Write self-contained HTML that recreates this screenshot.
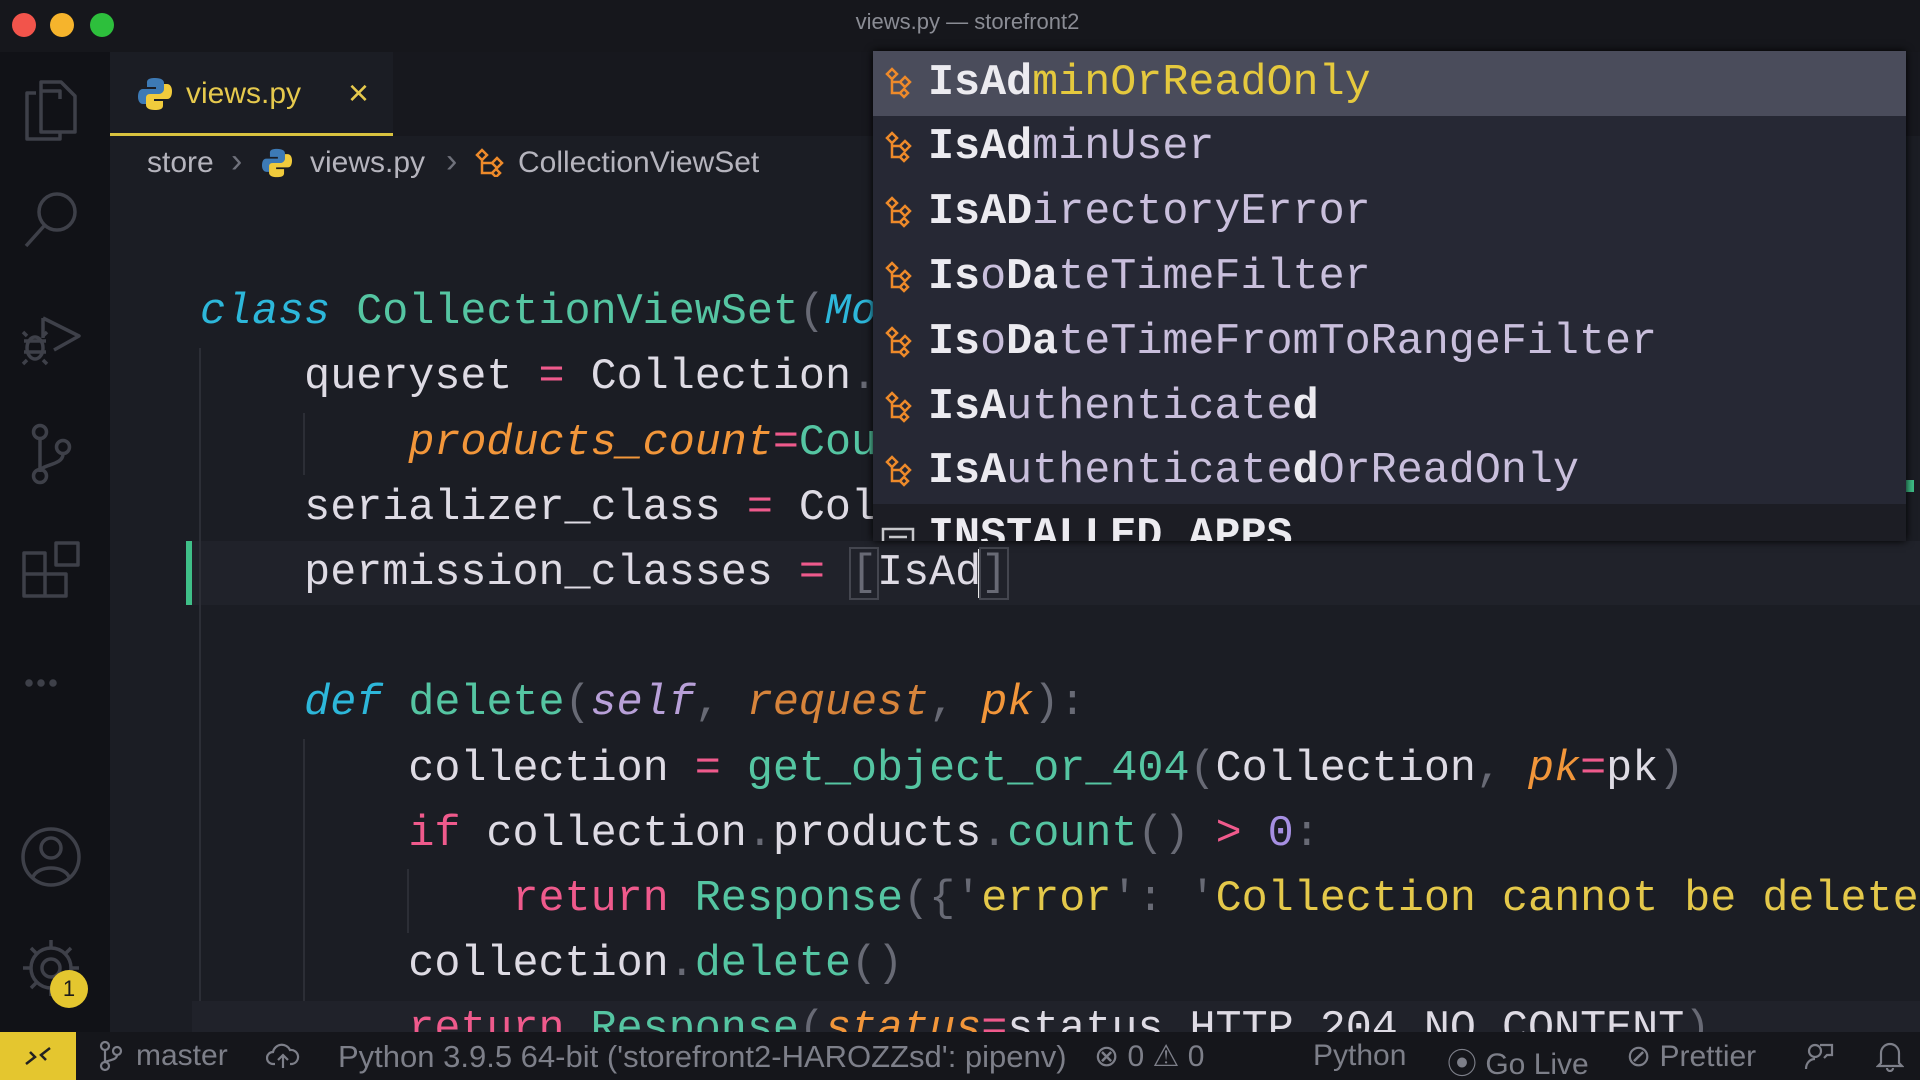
<!DOCTYPE html>
<html><head><meta charset="utf-8"><style>
*{margin:0;padding:0;box-sizing:border-box}
body{width:1920px;height:1080px;overflow:hidden;background:#1b1d24;position:relative;font-family:"Liberation Sans",sans-serif}
.abs{position:absolute}
#wrap{position:absolute;left:0;top:0;width:1920px;height:1080px;overflow:hidden}
#title{left:0;top:0;width:1920px;height:52px;background:#16171c}
#act{left:0;top:52px;width:110px;height:980px;background:#111217}
#tabs{left:110px;top:52px;width:1810px;height:84px;background:#17181e}
#tab{left:110px;top:52px;width:283px;height:84px;background:#1b1d24;border-bottom:3px solid #d9c23f}
#status{left:0;top:1032px;width:1920px;height:48px;background:#15161b;color:#7d7f89;font-size:30px}
.code{position:absolute;left:200px;font-family:"Liberation Mono",monospace;font-size:43.4px;line-height:65.2px;white-space:pre;color:#dedbe4;height:65.2px}
.k{color:#2db7da;font-style:italic}.c{color:#55c5a2}.p{color:#686a75}.o{color:#ef5a8c}
.or{color:#f2963a;font-style:italic}.s{color:#e4c84a}.n{color:#a68fe2}.sf{color:#b8a0d8;font-style:italic}.rq{color:#d7843b;font-style:italic}
.guide{position:absolute;width:2px;background:#2c2e36}
#sug{left:873px;top:51px;width:1033px;height:490px;background:#262834;overflow:hidden;box-shadow:0 0 8px #000;font-family:"Liberation Mono",monospace;font-size:43.4px}
.row{position:absolute;left:0;width:1033px;height:65px;line-height:65px;padding-left:55px;color:#c9bfdc;white-space:pre}
.row b{color:#ecebf0}
</style></head><body><div id="wrap">
<div id="title" class="abs">
 <div class="abs" style="left:12px;top:13px;width:24px;height:24px;border-radius:50%;background:#f2544b"></div>
 <div class="abs" style="left:50px;top:13px;width:24px;height:24px;border-radius:50%;background:#f6b42c"></div>
 <div class="abs" style="left:90px;top:13px;width:24px;height:24px;border-radius:50%;background:#2dbf3c"></div>
 <div class="abs" style="left:0;width:1935px;top:9px;text-align:center;color:#8a8c94;font-size:22px">views.py — storefront2</div>
</div>
<div id="act" class="abs">
<svg width="110" height="980" fill="none" stroke="#3e4049" stroke-width="3.5" stroke-linejoin="round">
 <g transform="translate(0,-52)">
 <path d="M42 91h18v8M36 93h-9v46h33v-6"/><path d="M41 82h20l14 14v36H41z"/>
 <circle cx="57" cy="212" r="18"/><path d="M44 226l-18 20"/>
 <path d="M43 318l36 18-25 14M43 318v20"/><ellipse cx="35" cy="348" rx="8" ry="11"/><path d="M24 341h22M24 352h22M27 336l-4-4M43 336l4-4M27 360l-4 4M43 360l4 4"/>
 <circle cx="40" cy="432" r="6.5"/><circle cx="40" cy="476" r="6.5"/><circle cx="63" cy="447" r="6.5"/><path d="M40 439v30M63 454c0 12-23 10-23 18"/>
 <path d="M24 553h21v21H24zM24 574h21v22H24zM45 574h21v22H45zM56 543h22v22H56z"/>
 <circle cx="29" cy="683" r="2" fill="#3e4049"/><circle cx="41" cy="683" r="2" fill="#3e4049"/><circle cx="53" cy="683" r="2" fill="#3e4049"/>
 <circle cx="51" cy="857" r="28"/><circle cx="51" cy="848" r="10"/><path d="M33 877c5-12 31-12 36 0"/>
 <circle cx="51" cy="968" r="9"/><path d="M51 940v8M51 988v8M23 968h8M71 968h8M31 948l6 6M65 982l6 6M71 948l-6 6M37 982l-6 6"/><circle cx="51" cy="968" r="20"/>
 </g></svg>
 <div class="abs" style="left:50px;top:918px;width:38px;height:38px;border-radius:50%;background:#e4c62f;color:#1b1b1b;font-size:22px;text-align:center;line-height:38px">1</div>
</div>
<div id="tabs" class="abs"></div>
<div id="tab" class="abs">
 <svg class="abs" style="left:28px;top:24px" width="34" height="36" viewBox="0 0 34 36"><path d="M17 2c-8 0-8 3-8 5v4h9v2H5c-4 0-5 4-5 8s2 7 5 7h3v-5c0-3 3-5 5-5h9c3 0 4-2 4-4V7c0-3-3-5-9-5z" fill="#3d7ab5"/><path d="M17 34c8 0 8-3 8-5v-4h-9v-2h13c4 0 5-4 5-8s-2-7-5-7h-3v5c0 3-3 5-5 5h-9c-3 0-4 2-4 4v7c0 3 3 5 9 5z" fill="#f1cb3c"/></svg>
 <div class="abs" style="left:76px;top:25px;color:#e6c94d;font-size:30px">views.py</div>
 <div class="abs" style="left:238px;top:20px;color:#e6c94d;font-size:36px">×</div>
</div>
<div class="abs" style="left:147px;top:146px;color:#b5b4bd;font-size:30px;white-space:nowrap">store</div>
<div class="abs" style="left:231px;top:142px;color:#6f717b;font-size:34px">›</div>
<svg class="abs" style="left:262px;top:147px" width="30" height="32" viewBox="0 0 34 36"><path d="M17 2c-8 0-8 3-8 5v4h9v2H5c-4 0-5 4-5 8s2 7 5 7h3v-5c0-3 3-5 5-5h9c3 0 4-2 4-4V7c0-3-3-5-9-5z" fill="#3d7ab5"/><path d="M17 34c8 0 8-3 8-5v-4h-9v-2h13c4 0 5-4 5-8s-2-7-5-7h-3v5c0 3-3 5-5 5h-9c-3 0-4 2-4 4v7c0 3 3 5 9 5z" fill="#f1cb3c"/></svg>
<div class="abs" style="left:310px;top:146px;color:#b5b4bd;font-size:30px">views.py</div>
<div class="abs" style="left:446px;top:142px;color:#6f717b;font-size:34px">›</div>
<svg class="abs" style="left:474px;top:147px" width="32" height="30" fill="none" stroke="#ee8a2a" stroke-width="2.5"><path d="M3 8l5-5 5 5-5 5zM18 16l5-5 5 5-5 5zM18 26l4-4 4 4-4 4zM8 13v13h10M8 16h10"/></svg>
<div class="abs" style="left:518px;top:146px;color:#b5b4bd;font-size:30px">CollectionViewSet</div>

<div class="abs" style="left:192px;top:541px;width:1728px;height:64px;background:#20222a"></div>
<div class="abs" style="left:186px;top:541px;width:6px;height:64px;background:#3fbf88"></div>
<div class="guide" style="left:199px;top:348px;height:684px"></div>
<div class="guide" style="left:303px;top:413px;height:62px"></div>
<div class="guide" style="left:303px;top:739px;height:293px"></div>
<div class="guide" style="left:407px;top:869px;height:64px"></div>
<div class="abs" style="left:192px;top:1001px;width:1728px;height:31px;background:#20222a"></div>

<div class="code" style="top:280px"><span class="k">class</span> <span class="c">CollectionViewSet</span><span class="p">(</span><span class="k">ModelViewSet</span><span class="p">):</span></div>
<div class="code" style="top:345px">    queryset <span class="o">=</span> Collection<span class="p">.</span>objects<span class="p">.</span><span class="c">annotate</span><span class="p">(</span></div>
<div class="code" style="top:411px">        <span class="or">products_count</span><span class="o">=</span><span class="c">Count</span><span class="p">(</span><span class="s">'products'</span><span class="p">))</span></div>
<div class="code" style="top:476px">    serializer_class <span class="o">=</span> CollectionSerializer</div>
<div class="code" style="top:541px">    permission_classes <span class="o">=</span> <span class="p" style="outline:2px solid #44464f">[</span>IsAd<span style="border-left:3px solid #e8e8e8;margin-left:-3px"></span><span class="p" style="outline:2px solid #44464f">]</span></div>
<div class="code" style="top:671px">    <span class="k">def</span> <span class="c">delete</span><span class="p">(</span><span class="sf">self</span><span class="p">,</span> <span class="rq">request</span><span class="p">,</span> <span class="or">pk</span><span class="p">):</span></div>
<div class="code" style="top:737px">        collection <span class="o">=</span> <span class="c">get_object_or_404</span><span class="p">(</span>Collection<span class="p">,</span> <span class="or">pk</span><span class="o">=</span>pk<span class="p">)</span></div>
<div class="code" style="top:802px">        <span class="o">if</span> collection<span class="p">.</span>products<span class="p">.</span><span class="c">count</span><span class="p">()</span> <span class="o">&gt;</span> <span class="n">0</span><span class="p">:</span></div>
<div class="code" style="top:867px">            <span class="o">return</span> <span class="c">Response</span><span class="p">({</span><span class="p">'</span><span class="s">error</span><span class="p">'</span><span class="p">:</span> <span class="p">'</span><span class="s">Collection cannot be deleted</span></div>
<div class="code" style="top:932px">        collection<span class="p">.</span><span class="c">delete</span><span class="p">()</span></div>
<div class="code" style="top:997px">        <span class="o">return</span> <span class="c">Response</span><span class="p">(</span><span class="or">status</span><span class="o">=</span>status<span class="p">.</span>HTTP_204_NO_CONTENT<span class="p">)</span></div>

<div class="abs" style="left:1906px;top:480px;width:8px;height:12px;background:#3fbf88"></div>

<div id="sug" class="abs">
 <div class="row" style="top:0;background:#4a4c5b;color:#e5c93e"><b>IsAd</b>minOrReadOnly</div>
 <div class="row" style="top:64px"><b>IsAd</b>minUser</div>
 <div class="row" style="top:129px"><b>IsAD</b>irectoryError</div>
 <div class="row" style="top:194px"><b>Is</b>o<b>Da</b>teTimeFilter</div>
 <div class="row" style="top:259px"><b>Is</b>o<b>Da</b>teTimeFromToRangeFilter</div>
 <div class="row" style="top:324px"><b>IsA</b>uthenticate<b>d</b></div>
 <div class="row" style="top:388px"><b>IsA</b>uthenticate<b>d</b>OrReadOnly</div>
 <div class="row" style="top:453px;background:#1c1d24"><b>INSTALLED_APPS</b></div>
 <svg class="abs" style="left:0;top:0" width="60" height="490" fill="none" stroke="#ee8a2a" stroke-width="2.5">
  <g id="g"><path d="M14 23l5-5 5 5-5 5zM27 31l5-5 5 5-5 5zM27 42l4-4 4 4-4 4zM19 28v14h8M19 31h8"/></g>
  <use href="#g" y="64"/><use href="#g" y="129"/><use href="#g" y="194"/><use href="#g" y="259"/><use href="#g" y="324"/><use href="#g" y="388"/>
  <path d="M10 478h30v20H10zM16 486h18M16 492h18" stroke="#c8c8cc"/>
 </svg>
</div>

<div id="status" class="abs">
 <div class="abs" style="left:0;top:0;width:76px;height:48px;background:#e4c62f"></div>
 <svg class="abs" style="left:20px;top:10px" width="36" height="28" fill="none" stroke="#222" stroke-width="2.5"><path d="M6 22l9-7-5-5M30 6l-9 7 5 5"/></svg>
 <svg class="abs" style="left:98px;top:8px" width="26" height="32" fill="none" stroke="#7d7f89" stroke-width="2.2"><circle cx="7" cy="6" r="4"/><circle cx="7" cy="26" r="4"/><circle cx="19" cy="11" r="4"/><path d="M7 10v12M19 15c0 6-12 5-12 8"/></svg>
 <div class="abs" style="left:136px;top:7px">master</div>
 <svg class="abs" style="left:266px;top:10px" width="34" height="28" fill="none" stroke="#7d7f89" stroke-width="2.2"><path d="M9 22H7a6 6 0 010-12 9 9 0 0117-2 6 6 0 012 14h-2M17 26V13M12 18l5-5 5 5"/></svg>
 <div class="abs" style="left:338px;top:7px;white-space:nowrap;font-size:31px">Python 3.9.5 64-bit ('storefront2-HAROZZsd': pipenv)</div>
 <div class="abs" style="left:1094px;top:7px;white-space:nowrap">⊗ 0 ⚠ 0</div>
 <div class="abs" style="left:1313px;top:7px">Python</div>
 <div class="abs" style="left:1447px;top:7px;white-space:nowrap">⦿ Go Live</div>
 <div class="abs" style="left:1626px;top:7px;white-space:nowrap">⊘ Prettier</div>
 <svg class="abs" style="left:1804px;top:10px" width="30" height="30" fill="none" stroke="#7d7f89" stroke-width="2.2"><circle cx="11" cy="9" r="6"/><path d="M2 27c0-6 4-10 9-10M16 3h12v10h-5l-3 3"/></svg>
 <svg class="abs" style="left:1876px;top:8px" width="28" height="32" fill="none" stroke="#7d7f89" stroke-width="2.2"><path d="M5 23V13a9 9 0 0118 0v10l3 3H2zM11 28a3 3 0 006 0"/></svg>
</div>
</div></body></html>
